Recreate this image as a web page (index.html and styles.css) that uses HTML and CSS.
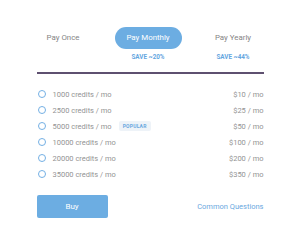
FILE: index.html
```html
<!DOCTYPE html>
<html lang="en">
<head>
    <meta charset="UTF-8">
    <title>Pricing</title>
    <link rel="stylesheet" href="styles.css">
</head>
<body>
    <div class="pricing">
        <div class="tabs">
            <div class="tab">Pay Once</div>
            <div class="tab active">Pay Monthly</div>
            <div class="tab">Pay Yearly</div>
        </div>
        <div class="saves">
            <span></span>
            <span class="save">SAVE ~20%</span>
            <span class="save">SAVE ~44%</span>
        </div>
        <div class="divider"></div>

        <div class="plans">
            <label class="plan"><span class="radio"></span><span class="credits">1000 credits / mo</span><span class="price">$10 / mo</span></label>
            <label class="plan"><span class="radio"></span><span class="credits">2500 credits / mo</span><span class="price">$25 / mo</span></label>
            <label class="plan"><span class="radio"></span><span class="credits">5000 credits / mo</span><span class="badge">POPULAR</span><span class="price">$50 / mo</span></label>
            <label class="plan"><span class="radio"></span><span class="credits">10000 credits / mo</span><span class="price">$100 / mo</span></label>
            <label class="plan"><span class="radio"></span><span class="credits">20000 credits / mo</span><span class="price">$200 / mo</span></label>
            <label class="plan"><span class="radio"></span><span class="credits">35000 credits / mo</span><span class="price">$350 / mo</span></label>
        </div>

        <div class="actions">
            <button class="buy-btn">Buy</button>
            <a class="faq-link" href="#">Common Questions</a>
        </div>
    </div>
</body>
</html>
```

FILE: styles.css
```css
body, html { margin: 0; padding: 0; background: #fff; font-family: Roboto, 'Liberation Sans', Arial, sans-serif; }
.pricing { width: 227px; margin: 0 auto; padding-top: 27px; }
.tabs, .saves { display: grid; grid-template-columns: repeat(3, 85px); margin: 0 -12px 0 -16px; }
.tab { height: 22px; line-height: 22px; text-align: center; font-size: 7.9px; color: #858585; }
.tab.active { justify-self: center; width: 67px; background: #6cade2; color: #fff; border-radius: 11px; }
.saves { margin-top: 4px; line-height: 8px; }
.save { text-align: center; font-size: 6.3px; font-weight: 700; color: #64a6df; }
.divider { height: 2px; background: #5e5070; margin-top: 11px; }
.plans { margin-top: 12px; }
.plan { display: flex; align-items: center; height: 16px; font-size: 7.5px; color: #939393; }
.radio { width: 6px; height: 6px; border: 1.3px solid #74b0e4; border-radius: 50%; margin: 0 7px 0 1px; }
.badge { margin-left: 7px; padding: 0 4px; height: 10px; line-height: 10px; font-size: 5px; font-weight: 700; letter-spacing: 0.2px; color: #6aa8df; background: #eef3f8; border-radius: 2px; }
.price { margin-left: auto; }
.actions { display: flex; align-items: center; justify-content: space-between; margin-top: 13px; }
.buy-btn { width: 71px; height: 23px; border: none; border-radius: 2px; background: #6cade2; color: #fff; font-family: inherit; font-size: 8px; cursor: pointer; }
.faq-link { font-size: 7.5px; color: #6aa8e0; text-decoration: none; }
```
